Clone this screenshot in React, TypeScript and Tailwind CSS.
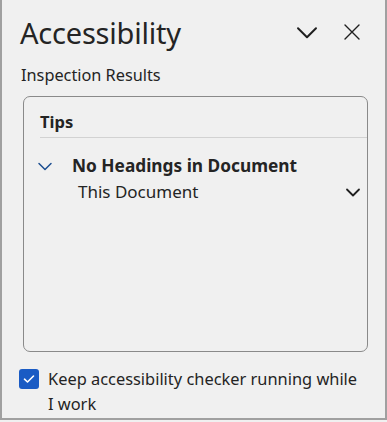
import React from 'react';

const font = { fontFamily: '"Noto Sans", "Open Sans", sans-serif' };

const ChevronDown: React.FC<{ className?: string; size?: number; stroke?: string; width?: number }> = ({
  className,
  size = 16,
  stroke = '#1f1f1f',
  width = 1.4,
}) => (
  <svg className={className} width={size} height={size} viewBox="0 0 16 16" fill="none">
    <path d="M2 5.5 L8 11.5 L14 5.5" stroke={stroke} strokeWidth={width} strokeLinecap="round" strokeLinejoin="round" />
  </svg>
);

const App: React.FC = () => {
  return (
    <div className="w-[387px] h-[422px] bg-[#f0f0f0] text-[#242424]" style={font}>
      <div className="h-[420px] border-l-2 border-r-2 border-b-2 border-[#a0a0a0] flex flex-col pl-[18px] pr-[17px]">
        <div className="flex items-center h-[62px] pt-[2px]">
          <h1 className="text-[29px] font-normal leading-none tracking-[-0.2px]">Accessibility</h1>
          <div className="ml-auto flex items-center gap-[23px] pr-[6px]">
            <ChevronDown size={24} width={1.3} />
            <svg width="20" height="20" viewBox="0 0 20 20" fill="none">
              <path d="M3 3 L17 17 M17 3 L3 17" stroke="#1f1f1f" strokeWidth="1.4" strokeLinecap="round" />
            </svg>
          </div>
        </div>
        <div className="text-[16.3px] leading-[26px] ml-[1px]">Inspection Results</div>
        <div className="mt-[8px] ml-[3px] h-[256px] border border-[#8a8a8a] rounded-[7px] pl-[16px] pr-0 flex flex-col">
          <div className="text-[16.5px] font-bold h-[41px] flex items-end pb-[2px] border-b border-[#d2d2d2]">Tips</div>
          <div className="flex items-center mt-[15px] h-[26px]">
            <ChevronDown className="ml-[-3px]" size={16} stroke="#1d4f91" width={1.5} />
            <span className="ml-[19px] text-[17.3px] font-bold">No Headings in Document</span>
          </div>
          <div className="flex items-center h-[26px] pr-[6px]">
            <span className="ml-[38px] text-[17px]">This Document</span>
            <ChevronDown className="ml-auto" size={16} width={1.8} />
          </div>
        </div>
        <div className="flex items-start mt-[14px] ml-[-1px]">
          <div className="w-[20px] h-[20px] rounded-[3px] bg-[#1a5bc4] flex items-center justify-center shrink-0 mt-[3px]">
            <svg width="12" height="10" viewBox="0 0 12 10" fill="none">
              <path d="M1.5 5.2 L4.5 8 L10.5 2" stroke="#fff" strokeWidth="1.6" strokeLinecap="round" strokeLinejoin="round" />
            </svg>
          </div>
          <div className="ml-[9px] w-[312px] shrink-0 text-[16.4px] leading-[25px]">Keep accessibility checker running while I work</div>
        </div>
      </div>
    </div>
  );
};

export default App;
